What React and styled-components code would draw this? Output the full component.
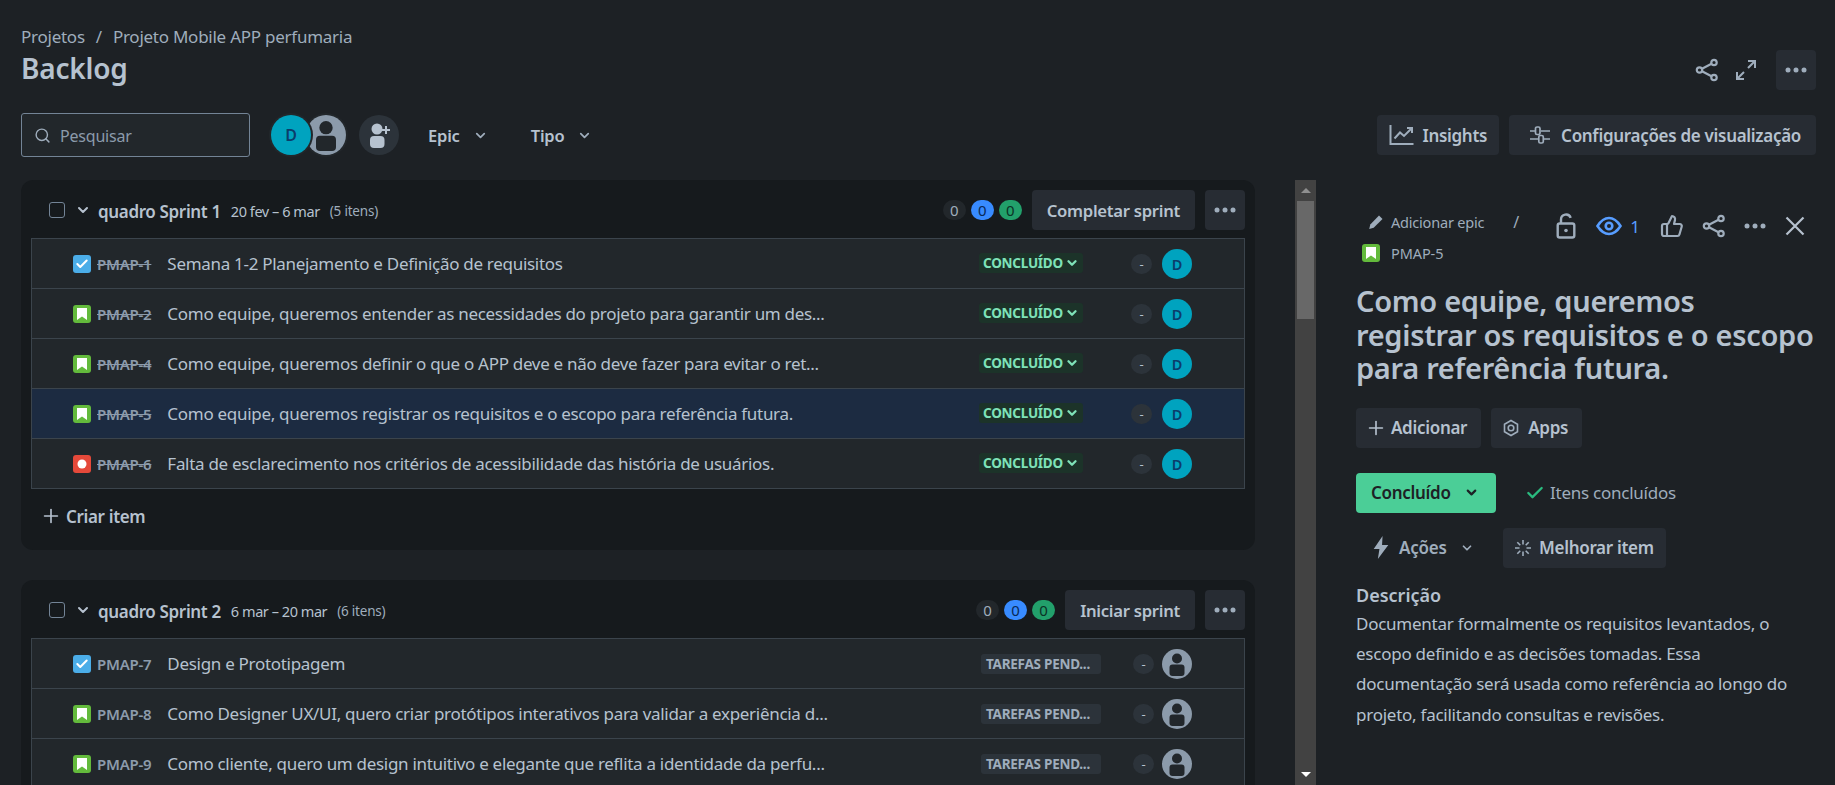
import styled, { createGlobalStyle } from "styled-components";
import { ChevronDown, Plus, Check, Search, ThumbsUp } from "lucide-react";

const GlobalStyle = createGlobalStyle`
  html, body {
    margin: 0;
    height: 100%;
    background: #1d2125;
  }
  * { box-sizing: border-box; }
`;

const Page = styled.div`
  height: 100vh;
  overflow: hidden;
  display: flex;
  flex-direction: column;
  background: #1d2125;
  color: #b6c2cf;
  font-family: "Noto Sans", "Open Sans", sans-serif;
`;
const Header = styled.header`
  height: 90px;
  flex-shrink: 0;
  padding: 26px 19px 0 21px;
  display: flex;
  justify-content: space-between;
`;
const Breadcrumb = styled.div`
  font-size: 17px;
  line-height: 22px;
  color: #9fadbc;
  letter-spacing: -0.25px;
  span { margin: 0 11px; }
`;
const Title = styled.h1`
  margin: 2px 0 0;
  font-size: 28px;
  line-height: 36px;
  font-weight: 600;
  color: #b6c2cf;
  letter-spacing: -0.2px;
`;
const HeaderActions = styled.div`
  align-self: flex-end;
  display: flex;
  align-items: center;
  gap: 19px;
`;
const ShareSlot = styled.div`
  margin-right: -3px;
  display: flex;
`;
const IconBox = styled.button`
  width: 40px;
  height: 40px;
  border: 0;
  padding: 0;
  border-radius: 4px;
  background: #272c33;
  color: #9fadbc;
  display: flex;
  align-items: center;
  justify-content: center;
  flex-shrink: 0;
`;
const SprintMenu = styled(IconBox)`
  margin-left: 10px;
`;
const Toolbar = styled.div`
  height: 44px;
  flex-shrink: 0;
  margin-top: 23px;
  padding: 0 19px 0 21px;
  display: flex;
  align-items: center;
`;
const SearchBox = styled.div`
  width: 229px;
  height: 44px;
  border: 1px solid #738496;
  border-radius: 3px;
  background: #22272b;
  display: flex;
  align-items: center;
  gap: 9px;
  padding: 1px 0 0 12px;
  color: #8c9bab;
  font-size: 16px;
  letter-spacing: -0.2px;
`;
const AvatarGroup = styled.div`
  display: flex;
  margin-left: 21px;
`;
const RoundD = styled.div`
  width: ${(p) => p.$size || 30}px;
  height: ${(p) => p.$size || 30}px;
  border-radius: 50%;
  background: #00a3bf;
  color: #0b3d6b;
  font-size: ${(p) => (p.$size ? 16 : 14.5)}px;
  font-weight: 600;
  display: flex;
  align-items: center;
  justify-content: center;
  flex-shrink: 0;
  ${(p) => p.$ring && "box-shadow: 0 0 0 2px #22272b; position: relative; z-index: 1;"}
`;
const RingedPerson = styled.div`
  margin-left: -5px;
  width: 40px;
  height: 40px;
  border-radius: 50%;
  box-shadow: 0 0 0 2px #22272b;
`;
const AddPeople = styled.div`
  width: 40px;
  height: 40px;
  margin-left: 13px;
  border-radius: 50%;
  background: #2c333a;
  display: flex;
  align-items: center;
  justify-content: center;
`;
const Filter = styled.div`
  display: flex;
  align-items: center;
  gap: 13px;
  margin-left: ${(p) => p.$left}px;
  font-size: 16.5px;
  font-weight: 600;
  letter-spacing: -0.2px;
`;
const ToolbarRight = styled.div`
  margin-left: auto;
  display: flex;
  gap: 10px;
`;
const Button = styled.button`
  height: 40px;
  border: 0;
  border-radius: 4px;
  background: #272c33;
  color: #b6c2cf;
  font-family: inherit;
  font-size: 17px;
  font-weight: 600;
  letter-spacing: -0.3px;
  padding: 0 ${(p) => p.$pad || 14}px 0 ${(p) => p.$left || p.$pad || 14}px;
  display: flex;
  align-items: center;
  gap: ${(p) => p.$gap || 8}px;
  white-space: nowrap;
  flex-shrink: 0;
`;
const SprintAction = styled(Button)`
  font-size: 16.7px;
  padding: 0 15px;
`;
const Body = styled.div`
  flex: 1;
  min-height: 0;
  margin-top: 23px;
  display: flex;
`;
const BacklogList = styled.div`
  width: 1295px;
  flex-shrink: 0;
  padding: 0 40px 0 21px;
  overflow: hidden;
`;
const Sprint = styled.section`
  background: #161a1d;
  border-radius: 12px;
  padding: 10px 10px 14px;
  margin-bottom: 30px;
`;
const SprintHeader = styled.div`
  height: 40px;
  margin-bottom: 8px;
  padding-left: 18px;
  display: flex;
  align-items: center;
`;
const Checkbox = styled.div`
  width: 16px;
  height: 16px;
  border: 1.5px solid #738496;
  border-radius: 3px;
`;
const SprintChevron = styled(ChevronDown)`
  margin-left: 10px;
  flex-shrink: 0;
`;
const SprintName = styled.strong`
  margin: 2px 0 0 7px;
  font-size: 17px;
  font-weight: 600;
  letter-spacing: -0.35px;
`;
const SprintDates = styled.span`
  margin: 2px 0 0 10px;
  font-size: 14.5px;
  letter-spacing: -0.45px;
`;
const SprintCount = styled.span`
  margin: 2px 0 0 10px;
  font-size: 13.5px;
  color: #9fadbc;
  letter-spacing: -0.2px;
`;
const Badges = styled.div`
  margin-left: auto;
  margin-right: 10px;
  display: flex;
  gap: 5px;
`;
const Count = styled.div`
  width: 23px;
  height: 20px;
  border-radius: 10px;
  background: ${(p) => p.$bg};
  color: ${(p) => p.$color};
  font-size: 15px;
  display: flex;
  align-items: center;
  justify-content: center;
`;
const Rows = styled.div`
  border: 1px solid #3b444c;
  border-bottom: 0;
`;
const Row = styled.div`
  height: 50px;
  padding-left: 41px;
  display: flex;
  align-items: center;
  background: ${(p) => (p.$active ? "#1c2b41" : "#22272b")};
  border-bottom: 1px solid #3b444c;
`;
const IssueKey = styled.span`
  margin-left: 6px;
  font-size: 15px;
  font-weight: 600;
  letter-spacing: -0.25px;
  color: #8c9bab;
  text-decoration: ${(p) => (p.$done ? "line-through" : "none")};
`;
const Summary = styled.span`
  flex: 1;
  margin-left: 16px;
  font-size: 17px;
  letter-spacing: -0.3px;
  white-space: nowrap;
  overflow: hidden;
`;
const StatusCell = styled.div`
  width: 152px;
  flex-shrink: 0;
  display: flex;
  margin-top: ${(p) => (p.$done ? -2 : 0)}px;
`;
const Status = styled.span`
  display: inline-flex;
  align-items: center;
  gap: 2px;
  height: 20px;
  border-radius: 3px;
  font-size: 13.5px;
  font-weight: 700;
  white-space: nowrap;
  letter-spacing: -0.25px;
  ${(p) =>
    p.$done
      ? "background: #1c3329; color: #7ee2b8; padding: 0 4px;"
      : "background: #2c333a; color: #9fadbc; padding: 0 5px; margin-left: 2px; width: 120px;"}
`;
const PointsCell = styled.div`
  width: 31px;
  flex-shrink: 0;
`;
const Points = styled.div`
  width: 21px;
  height: 20px;
  border-radius: 10px;
  margin-left: ${(p) => (p.$shift ? 2 : 0)}px;
  background: #2c333a;
  font-size: 13px;
  display: flex;
  align-items: center;
  justify-content: center;
`;
const RowEnd = styled.div`
  width: 52px;
  flex-shrink: 0;
`;
const CreateItem = styled.div`
  height: 40px;
  margin-top: 7px;
  padding-left: 9px;
  display: flex;
  align-items: center;
  gap: 4px;
  font-size: 17px;
  font-weight: 600;
  letter-spacing: -0.35px;
`;
const Scrollbar = styled.div`
  width: 21px;
  flex-shrink: 0;
  background: #424242;
  display: flex;
  flex-direction: column;
  align-items: center;
`;
const ScrollArrow = styled.div`
  height: 21px;
  display: flex;
  align-items: center;
  justify-content: center;
  margin-top: ${(p) => (p.$down ? "auto" : 0)};
  &::after {
    content: "";
    border-left: 5px solid transparent;
    border-right: 5px solid transparent;
    ${(p) => (p.$down ? "border-top: 5px solid #fff;" : "border-bottom: 5px solid #8f8f8f;")}
  }
`;
const ScrollThumb = styled.div`
  width: 17px;
  height: 118px;
  background: #686868;
`;
const Detail = styled.aside`
  flex: 1;
  min-width: 0;
  padding: 30px 18px 0 40px;
`;
const DetailHead = styled.div`
  display: flex;
  justify-content: space-between;
  padding-right: 12px;
`;
const EpicLine = styled.div`
  height: 24px;
  padding-left: 12px;
  display: flex;
  align-items: center;
  gap: 7px;
  font-size: 14.5px;
  letter-spacing: -0.2px;
  color: #9fadbc;
  white-space: nowrap;
  i { margin-left: 22px; font-style: normal; font-size: 16px; }
`;
const KeyLine = styled.div`
  margin-top: 9px;
  padding-left: 6px;
  display: flex;
  align-items: center;
  gap: 11px;
  font-size: 14.5px;
  color: #9fadbc;
  letter-spacing: -0.1px;
`;
const DetailActions = styled.div`
  height: 32px;
  display: flex;
  align-items: center;
`;
const Watch = styled.div`
  display: flex;
  align-items: center;
  gap: 8px;
  margin: 0 20px 0 20px;
  color: #579dff;
  font-size: 17px;
`;
const ActionGap = styled.div`
  width: ${(p) => p.$w}px;
`;
const IssueTitle = styled.h2`
  margin: 21px 0 0;
  font-size: 29px;
  line-height: 33.5px;
  font-weight: 600;
  color: #b6c2cf;
  letter-spacing: -0.3px;
`;
const ButtonRow = styled.div`
  display: flex;
  align-items: center;
  gap: ${(p) => p.$gap ?? 10}px;
  margin-top: ${(p) => p.$top}px;
`;
const StatusButton = styled(Button)`
  width: 140px;
  background: #4bce97;
  color: #1d2125;
  padding: 0 15px;
  gap: 13px;
`;
const Resolved = styled.div`
  margin-left: 29px;
  display: flex;
  align-items: center;
  gap: 5px;
  font-size: 17px;
  letter-spacing: -0.25px;
  color: #9fadbc;
`;
const ActionsMenu = styled.div`
  width: 137px;
  padding-left: 16px;
  display: flex;
  align-items: center;
  gap: 9px;
  font-size: 17px;
  font-weight: 600;
  letter-spacing: -0.25px;
  color: #9fadbc;
  svg:last-child { margin-left: 4px; }
`;
const DescriptionTitle = styled.h3`
  margin: 16px 0 0;
  font-size: 18px;
  line-height: 22px;
  font-weight: 600;
`;
const Description = styled.p`
  margin: 3px 0 0;
  font-size: 17px;
  line-height: 30.4px;
  letter-spacing: -0.25px;
  color: #b6c2cf;
`;
const IconSquare = styled.div`
  width: 18px;
  height: 18px;
  border-radius: 3px;
  flex-shrink: 0;
  background: ${(p) => p.$bg};
  display: flex;
  align-items: center;
  justify-content: center;
`;

const StoryIcon = () => (
  <IconSquare $bg="#63ba3c">
    <svg width="10" height="12" viewBox="0 0 10 12">
      <path d="M0 0h10v12L5 8.4 0 12z" fill="#fff" />
    </svg>
  </IconSquare>
);
const TaskIcon = () => (
  <IconSquare $bg="#4bade8">
    <Check size={14} color="#fff" strokeWidth={3.5} />
  </IconSquare>
);
const BugIcon = () => (
  <IconSquare $bg="#e5493a">
    <svg width="10" height="10" viewBox="0 0 10 10">
      <circle cx="5" cy="5" r="4.5" fill="#fff" />
    </svg>
  </IconSquare>
);
const issueIcons = { story: StoryIcon, task: TaskIcon, bug: BugIcon };

const Person = ({ size = 30 }) => (
  <svg width={size} height={size} viewBox="0 0 30 30" style={{ flexShrink: 0, display: "block" }}>
    <circle cx="15" cy="15" r="15" fill="#8c9bab" />
    <circle cx="15" cy="9.5" r="5" fill="#22272b" />
    <path d="M7.500 18.500a3 3 0 0 1 3-3h9a3 3 0 0 1 3 3v5.500a3 3 0 0 1-3 3h-9a3 3 0 0 1-3-3z" fill="#22272b" />
  </svg>
);
const ShareIcon = ({ size = 24 }) => (
  <svg width={size} height={size} viewBox="0 0 24 24" fill="none" stroke="#9fadbc" strokeWidth="2.200">
    <circle cx="4.500" cy="12" r="2.700" />
    <circle cx="19" cy="4.500" r="2.700" />
    <circle cx="19" cy="19.500" r="2.700" />
    <path d="M7 10.700l9.500-5M7 13.300l9.500 5" />
  </svg>
);
const ExpandIcon = () => (
  <svg width="22" height="22" viewBox="0 0 22 22" fill="none" stroke="#9fadbc" strokeWidth="2">
    <path d="M13 2h7v7M20 2l-7 7M9 20H2v-7M2 20l7-7" />
  </svg>
);
const Dots = ({ color = "#9fadbc", w = 24 }) => (
  <svg width={w} height="6" viewBox="0 0 24 6" fill={color}>
    <circle cx="4" cy="3" r="2.500" />
    <circle cx="12" cy="3" r="2.500" />
    <circle cx="20" cy="3" r="2.500" />
  </svg>
);
const PersonAdd = () => (
  <svg width="24" height="26" viewBox="0 0 24 26" fill="#b6c2cf">
    <circle cx="10" cy="7" r="5.500" />
    <rect x="3" y="14" width="14.500" height="12" rx="4" />
    <path d="M18 4h2v3h3v2h-3v3h-2V9h-3V7h3z" />
  </svg>
);
const InsightsIcon = () => (
  <svg width="26" height="22" viewBox="0 0 26 22" fill="none" stroke="#9fadbc" strokeWidth="2">
    <path d="M1.500 1v19h23" />
    <path d="M5.500 14.500l5.500-6 4 3.500 7-7" />
    <path d="M18 4h5v5" />
  </svg>
);
const SlidersIcon = () => (
  <svg width="22" height="20" viewBox="0 0 22 20" fill="none" stroke="#9fadbc" strokeWidth="1.700">
    <path d="M1 6h5M12 6h9M1 14h8M15 14h6" />
    <rect x="6.500" y="2" width="4.500" height="7.500" rx="1.500" />
    <rect x="9.800" y="10.500" width="4.500" height="7.500" rx="1.500" />
  </svg>
);
const PencilIcon = () => (
  <svg width="16" height="16" viewBox="0 0 16 16" fill="#9fadbc">
    <path d="M11 1.500l3.500 3.500-8.800 8.800L1.200 15l1.100-4.600z" />
  </svg>
);
const AppsIcon = () => (
  <svg width="16" height="18" viewBox="0 0 16 18" fill="none" stroke="#9fadbc" strokeWidth="1.600">
    <path d="M8 1.500l6.500 3.700v7.600L8 16.500l-6.500-3.700V5.200z" />
    <circle cx="8" cy="9" r="2.800" />
  </svg>
);
const SparkIcon = () => (
  <svg width="16" height="16" viewBox="0 0 16 16" fill="none" stroke="#9fadbc" strokeWidth="1.600">
    <path d="M8 0v4.500M8 11.500V16M0 8h4.500M11.500 8H16M2.300 2.300l3 3M10.700 10.700l3 3M13.700 2.300l-3 3M5.300 10.700l-3 3" />
  </svg>
);
const LockIcon = () => (
  <svg width="20" height="26" viewBox="0 0 20 26" fill="none" stroke="#9fadbc" strokeWidth="2.400">
    <path d="M5 10V6.500a5 5 0 0 1 9.700-1.700" />
    <rect x="1.700" y="10.500" width="16.600" height="14" rx="2" />
    <circle cx="10" cy="17.500" r="1.800" fill="#9fadbc" stroke="none" />
  </svg>
);
const EyeIcon = () => (
  <svg width="26" height="20" viewBox="0 0 26 20" fill="none" stroke="#579dff" strokeWidth="2.600">
    <path d="M1.500 10C5 4.500 9 2 13 2s8 2.500 11.500 8C21 15.500 17 18 13 18s-8-2.500-11.500-8z" />
    <circle cx="13" cy="10" r="3.300" />
  </svg>
);
const CloseIcon = () => (
  <svg width="20" height="20" viewBox="0 0 20 20" fill="none" stroke="#b6c2cf" strokeWidth="2.200">
    <path d="M1.500 1.500l17 17M18.500 1.500l-17 17" />
  </svg>
);
const BoltIcon = () => (
  <svg width="18" height="23" viewBox="0 0 16 22" fill="#9fadbc">
    <path d="M9.500 0L1 12.500h5.500L5 22l10-13.500H9z" />
  </svg>
);

const sprint1 = [
  ["task", "PMAP-1", "Semana 1-2 Planejamento e Definição de requisitos"],
  ["story", "PMAP-2", "Como equipe, queremos entender as necessidades do projeto para garantir um des..."],
  ["story", "PMAP-4", "Como equipe, queremos definir o que o APP deve e não deve fazer para evitar o ret..."],
  ["story", "PMAP-5", "Como equipe, queremos registrar os requisitos e o escopo para referência futura.", true],
  ["bug", "PMAP-6", "Falta de esclarecimento nos critérios de acessibilidade das história de usuários."],
];
const sprint2 = [
  ["task", "PMAP-7", "Design e Prototipagem"],
  ["story", "PMAP-8", "Como Designer UX/UI, quero criar protótipos interativos para validar a experiência d..."],
  ["story", "PMAP-9", "Como cliente, quero um design intuitivo e elegante que reflita a identidade da perfu..."],
];

const IssueRow = ({ item, done }) => {
  const [type, key, text, active] = item;
  const Icon = issueIcons[type];
  return (
    <Row $active={active}>
      <Icon />
      <IssueKey $done={done}>{key}</IssueKey>
      <Summary>{text}</Summary>
      <StatusCell $done={done}>
        {done ? (
          <Status $done>
            CONCLUÍDO
            <ChevronDown size={14} strokeWidth={4} />
          </Status>
        ) : (
          <Status>TAREFAS PEND...</Status>
        )}
      </StatusCell>
      <PointsCell>
        <Points $shift={!done}>-</Points>
      </PointsCell>
      {done ? <RoundD>D</RoundD> : <Person />}
      <RowEnd />
    </Row>
  );
};

const SprintHead = ({ name, dates, count, action }) => (
  <SprintHeader>
    <Checkbox />
    <SprintChevron size={16} strokeWidth={3} color="#b6c2cf" />
    <SprintName>{name}</SprintName>
    <SprintDates>{dates}</SprintDates>
    <SprintCount>{count}</SprintCount>
    <Badges>
      <Count $bg="#22272b" $color="#9fadbc">0</Count>
      <Count $bg="#388bff" $color="#092957">0</Count>
      <Count $bg="#22a06b" $color="#0b3326">0</Count>
    </Badges>
    <SprintAction>{action}</SprintAction>
    <SprintMenu>
      <Dots />
    </SprintMenu>
  </SprintHeader>
);

export default function App() {
  return (
    <Page>
      <GlobalStyle />
      <Header>
        <div>
          <Breadcrumb>
            Projetos<span>/</span>Projeto Mobile APP perfumaria
          </Breadcrumb>
          <Title>Backlog</Title>
        </div>
        <HeaderActions>
          <ShareSlot>
            <ShareIcon />
          </ShareSlot>
          <ExpandIcon />
          <IconBox>
            <Dots />
          </IconBox>
        </HeaderActions>
      </Header>
      <Toolbar>
        <SearchBox>
          <Search size={17} color="#9fadbc" />
          Pesquisar
        </SearchBox>
        <AvatarGroup>
          <RoundD $size={40} $ring>D</RoundD>
          <RingedPerson>
            <Person size={40} />
          </RingedPerson>
        </AvatarGroup>
        <AddPeople>
          <PersonAdd />
        </AddPeople>
        <Filter $left={29}>
          Epic
          <ChevronDown size={15} strokeWidth={2.8} color="#9fadbc" />
        </Filter>
        <Filter $left={43}>
          Tipo
          <ChevronDown size={15} strokeWidth={2.8} color="#9fadbc" />
        </Filter>
        <ToolbarRight>
          <Button $pad={12} $gap={7}>
            <InsightsIcon />
            Insights
          </Button>
          <Button $pad={15} $left={20} $gap={10}>
            <SlidersIcon />
            Configurações de visualização
          </Button>
        </ToolbarRight>
      </Toolbar>
      <Body>
        <BacklogList>
          <Sprint>
            <SprintHead name="quadro Sprint 1" dates="20 fev – 6 mar" count="(5 itens)" action="Completar sprint" />
            <Rows>
              {sprint1.map((item) => (
                <IssueRow key={item[1]} item={item} done />
              ))}
            </Rows>
            <CreateItem>
              <Plus size={22} strokeWidth={1.8} />
              Criar item
            </CreateItem>
          </Sprint>
          <Sprint>
            <SprintHead name="quadro Sprint 2" dates="6 mar – 20 mar" count="(6 itens)" action="Iniciar sprint" />
            <Rows>
              {sprint2.map((item) => (
                <IssueRow key={item[1]} item={item} />
              ))}
            </Rows>
          </Sprint>
        </BacklogList>
        <Scrollbar>
          <ScrollArrow />
          <ScrollThumb />
          <ScrollArrow $down />
        </Scrollbar>
        <Detail>
          <DetailHead>
            <div>
              <EpicLine>
                <PencilIcon />
                Adicionar epic
                <i>/</i>
              </EpicLine>
              <KeyLine>
                <StoryIcon />
                PMAP-5
              </KeyLine>
            </div>
            <DetailActions>
              <LockIcon />
              <Watch>
                <EyeIcon />1
              </Watch>
              <ThumbsUp size={24} color="#9fadbc" strokeWidth={2.200} />
              <ActionGap $w={18} />
              <ShareIcon />
              <ActionGap $w={17} />
              <Dots w={24} />
              <ActionGap $w={18} />
              <CloseIcon />
            </DetailActions>
          </DetailHead>
          <IssueTitle>
            Como equipe, queremos registrar os requisitos e o escopo para referência futura.
          </IssueTitle>
          <ButtonRow $top={23}>
            <Button $pad={14} $left={9} $gap={4}>
              <Plus size={22} strokeWidth={1.8} />
              Adicionar
            </Button>
            <Button $pad={14} $left={12} $gap={9}>
              <AppsIcon />
              Apps
            </Button>
          </ButtonRow>
          <ButtonRow $top={25} $gap={0}>
            <StatusButton>
              Concluído
              <ChevronDown size={15} strokeWidth={3.5} />
            </StatusButton>
            <Resolved>
              <Check size={20} color="#2abb7f" strokeWidth={2.8} />
              Itens concluídos
            </Resolved>
          </ButtonRow>
          <ButtonRow $top={15} $gap={10}>
            <ActionsMenu>
              <BoltIcon />
              Ações
              <ChevronDown size={14} strokeWidth={3} />
            </ActionsMenu>
            <Button $pad={12} $gap={8}>
              <SparkIcon />
              Melhorar item
            </Button>
          </ButtonRow>
          <DescriptionTitle>Descrição</DescriptionTitle>
          <Description>
            Documentar formalmente os requisitos levantados, o escopo definido e as decisões tomadas. Essa
            documentação será usada como referência ao longo do projeto, facilitando consultas e revisões.
          </Description>
        </Detail>
      </Body>
    </Page>
  );
}
